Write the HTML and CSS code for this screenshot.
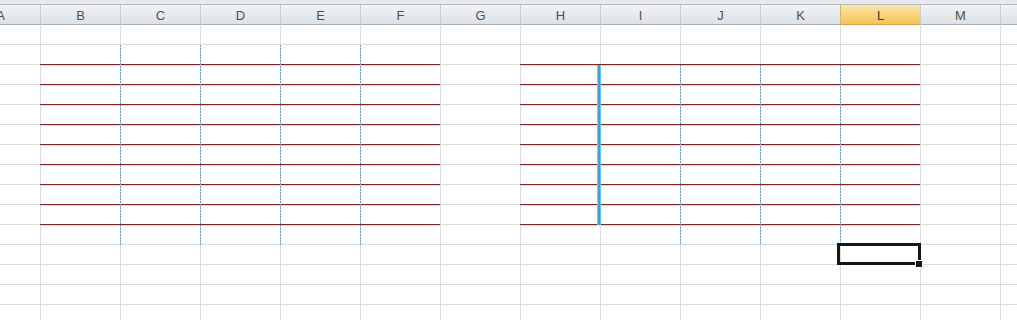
FILE: index.html
```html
<!DOCTYPE html>
<html>
<head>
<meta charset="utf-8">
<link rel="stylesheet" href="styles.css">
</head>
<body>
<div class="app">
  <div class="topband"></div>
  <div class="colheads">
    <div class="ch">A</div>
    <div class="ch">B</div>
    <div class="ch">C</div>
    <div class="ch">D</div>
    <div class="ch">E</div>
    <div class="ch">F</div>
    <div class="ch">G</div>
    <div class="ch">H</div>
    <div class="ch">I</div>
    <div class="ch">J</div>
    <div class="ch">K</div>
    <div class="ch ch-sel">L</div>
    <div class="ch">M</div>
    <div class="ch"></div>
  </div>
  <div class="sheet">
    <div class="rows rows-left">
      <div class="r"></div><div class="r"></div><div class="r"></div>
      <div class="r"></div><div class="r"></div><div class="r"></div>
      <div class="r"></div><div class="r"></div><div class="r"></div>
    </div>
    <div class="rows rows-right">
      <div class="r"></div><div class="r"></div><div class="r"></div>
      <div class="r"></div><div class="r"></div><div class="r"></div>
      <div class="r"></div><div class="r"></div><div class="r"></div>
    </div>
    <div class="dots dots-left">
      <div class="dc"></div><div class="dc"></div><div class="dc"></div><div class="dc"></div>
    </div>
    <div class="dots dots-right">
      <div class="dc"></div><div class="dc"></div><div class="dc"></div>
    </div>
    <div class="split"><div class="split-line"></div></div>
    <div class="sel"><div class="sel-box"><div class="handle"></div></div></div>
  </div>
</div>
</body>
</html>
```

FILE: styles.css
```css
html, body {
  margin: 0;
  padding: 0;
  background: #ffffff;
}
body {
  width: 1017px;
  height: 320px;
  overflow: hidden;
  font-family: "Liberation Sans", Arial, sans-serif;
}
.app {
  width: 1017px;
  overflow: hidden;
}
.topband {
  height: 4px;
  background: #e8eaee;
  border-bottom: 1px solid #b3bac3;
}
.colheads {
  display: grid;
  grid-template-columns: repeat(14, 80px);
  margin-left: -40px;
  width: 1120px;
}
.ch {
  height: 19px;
  box-sizing: content-box;
  border-left: 1px solid #c9cdd3;
  border-bottom: 1px solid #aab0b8;
  background: linear-gradient(to bottom, #f1f3f5 0%, #e6e9ec 55%, #dde1e5 100%);
  color: #505050;
  font-size: 13px;
  line-height: 21px;
  text-align: center;
}
.ch-sel {
  background: linear-gradient(to bottom, #fde7ae 0%, #f9d57f 50%, #f3c25a 100%);
  border-left-color: #e2b35a;
  border-bottom-color: #d9a441;
  color: #3a3a3a;
}
.sheet {
  position: relative;
  display: grid;
  grid-template-columns: repeat(14, 80px);
  grid-template-rows: repeat(15, 20px);
  margin-left: -40px;
  width: 1120px;
  background-image:
    linear-gradient(to right, #dadcdd 1px, transparent 1px),
    linear-gradient(to bottom, transparent 19px, #dadcdd 19px);
  background-size: 80px 20px;
}
.rows {
  display: flex;
  flex-direction: column;
}
.rows-left {
  grid-column: 2 / 7;
  grid-row: 2 / 11;
}
.rows-right {
  grid-column: 8 / 13;
  grid-row: 2 / 11;
}
.r {
  height: 20px;
  box-sizing: border-box;
  border-bottom: 1px solid #7e2222;
  box-shadow: 0 1px 0 #f1d2d2;
}
.dots {
  display: flex;
  margin-left: -1px;
}
.dots-left {
  grid-column: 3 / 7;
  grid-row: 2 / 12;
}
.dots-right {
  grid-column: 10 / 13;
  grid-row: 3 / 12;
}
.dc {
  width: 80px;
  background-image: linear-gradient(to bottom, #5fa2cf 2px, transparent 2px);
  background-size: 1px 3px;
  background-repeat: repeat-y;
  background-position: 1px 0;
}
.split {
  grid-column: 9;
  grid-row: 3 / 11;
  display: flex;
}
.split-line {
  width: 4px;
  margin-left: -3px;
  background: linear-gradient(to right, #a9dcef 0, #44b0dd 25%, #2f9fd2 60%, #8ed0ea 100%);
}
.sel {
  grid-column: 12;
  grid-row: 12;
  position: relative;
}
.sel-box {
  position: absolute;
  top: -2px;
  left: -3px;
  right: -1px;
  bottom: 0;
  border: 3px solid #161616;
}
.handle {
  position: absolute;
  left: 75px;
  top: 14px;
  width: 6px;
  height: 6px;
  background: #161616;
  border: 1px solid #ffffff;
}
```
